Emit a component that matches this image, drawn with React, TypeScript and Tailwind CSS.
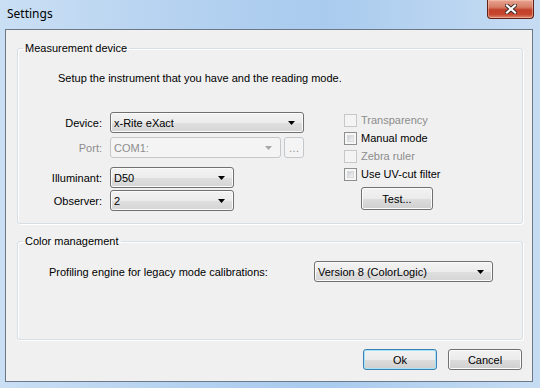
import React from "react";

const ui = "font-['Liberation_Sans',Arial,sans-serif] text-[11px] leading-[14px]";

function Arrow({ disabled }: { disabled?: boolean }) {
  return (
    <svg width="7" height="4" viewBox="0 0 7 4" className="shrink-0">
      <polygon points="0,0 7,0 3.5,4" fill={disabled ? "#a7a7a7" : "#000"} />
    </svg>
  );
}

function Combo({ text, w, disabled }: { text: string; w: string; disabled?: boolean }) {
  return (
    <div
      className={`${w} h-[21px] rounded-[3px] border flex items-center justify-between pl-[3px] pr-[8px] ${
        disabled
          ? "border-[#c4c8cb] bg-[#f4f4f4] text-[#8d8d8d]"
          : "border-[#707070] bg-[linear-gradient(#f3f3f3,#ececec_50%,#dfdfdf_51%,#d5d5d5)] text-black shadow-[inset_0_0_0_1px_#fbfbfb]"
      }`}
    >
      <span>{text}</span>
      <Arrow disabled={disabled} />
    </div>
  );
}

function Check({ label, disabled }: { label: string; disabled?: boolean }) {
  return (
    <div className="h-[18px] flex items-center">
      <div
        className={`w-[13px] h-[13px] border p-[2px] ${
          disabled ? "border-[#c8c8c8] bg-[#f4f4f4]" : "border-[#8e8f8f] bg-[#f6f6f6]"
        }`}
      >
        {!disabled && <div className="w-full h-full bg-[linear-gradient(135deg,#cbcfd5,#f4f4f4)] border border-[#d8dadc]" />}
      </div>
      <span className={`ml-[4px] ${disabled ? "text-[#8d8d8d]" : "text-black"}`}>{label}</span>
    </div>
  );
}

function Button({ text, w, h, primary }: { text: string; w: string; h: string; primary?: boolean }) {
  return (
    <div
      className={`${w} ${h} rounded-[3px] border flex items-center justify-center bg-[linear-gradient(#f2f2f2,#ebebeb_50%,#dddddd_51%,#cfcfcf)] ${
        primary
          ? "border-[#3c7fb1] shadow-[inset_0_0_0_1px_#a3e4f9]"
          : "border-[#707070] shadow-[inset_0_0_0_1px_#fcfcfc]"
      }`}
    >
      {text}
    </div>
  );
}

function CloseButton() {
  return (
    <div className="w-[47px] h-[19px] rounded-b-[4px] border border-t-0 border-[#5e2218] bg-[linear-gradient(#e8a491,#d77d66_40%,#c2412a_55%,#c5462d_80%,#e0896e)] shadow-[inset_0_0_0_1px_rgba(255,210,190,0.45)] flex items-center justify-center">
      <svg width="12" height="10" viewBox="0 0 12 10">
        <g strokeLinecap="square">
          <path d="M2 1.5 L10 8.5 M10 1.5 L2 8.5" stroke="#3b2a28" strokeWidth="4" />
          <path d="M2 1.5 L10 8.5 M10 1.5 L2 8.5" stroke="#ffffff" strokeWidth="2.2" />
        </g>
      </svg>
    </div>
  );
}

export default function App() {
  return (
    <div className={`w-[540px] h-[388px] overflow-hidden flex flex-col bg-[linear-gradient(90deg,#cadff4,#b4d1f0_35%,#a9cbee_60%,#c6dcf3)] ${ui}`}>
      <div className="h-[29px] shrink-0 flex items-start justify-between pl-[7px] pr-[6px]">
        <span className="mt-[6px] font-['Noto_Sans',sans-serif] text-[12px] leading-[16px] text-black">Settings</span>
        <CloseButton />
      </div>

      <div className="ml-[5px] w-[528px] h-[353px] border border-[#6b7888] bg-[#f0f0f0] flex flex-col pl-[11px] text-black">
        <fieldset className="mt-[11px] w-[506px] h-[183px] rounded-[3px] border border-[#d5dfe5] shadow-[inset_1px_1px_0_#fff,1px_1px_0_#fff]">
          <legend className="ml-[5px] px-[2px] leading-[14px]">Measurement device</legend>
          <div className="mt-[16px] pl-[40px]">Setup the instrument that you have and the reading mode.</div>
          <div className="mt-[27px] flex">
            <div className="w-[286px] flex flex-col">
              <div className="flex items-center">
                <span className="w-[84px] text-right">Device:</span>
                <div className="ml-[8px]"><Combo text="x-Rite eXact" w="w-[194px]" /></div>
              </div>
              <div className="mt-[4px] flex items-center">
                <span className="w-[84px] text-right text-[#8d8d8d]">Port:</span>
                <div className="ml-[8px] flex">
                  <Combo text="COM1:" w="w-[171px]" disabled />
                  <div className="ml-[3px] w-[20px] h-[21px] rounded-[3px] border border-[#c4c8cb] bg-[#f4f4f4] text-[#8d8d8d] flex items-center justify-center">…</div>
                </div>
              </div>
              <div className="mt-[9px] flex items-center">
                <span className="w-[84px] text-right">Illuminant:</span>
                <div className="ml-[8px]"><Combo text="D50" w="w-[124px]" /></div>
              </div>
              <div className="mt-[2px] flex items-center">
                <span className="w-[84px] text-right">Observer:</span>
                <div className="ml-[8px]"><Combo text="2" w="w-[124px]" /></div>
              </div>
            </div>
            <div className="ml-[40px] mt-[-1px] flex flex-col">
              <Check label="Transparency" disabled />
              <Check label="Manual mode" />
              <Check label="Zebra ruler" disabled />
              <Check label="Use UV-cut filter" />
              <div className="mt-[4px] ml-[17px]">
                <Button text="Test..." w="w-[72px]" h="h-[23px]" />
              </div>
            </div>
          </div>
        </fieldset>

        <fieldset className="mt-[10px] w-[506px] h-[106px] rounded-[3px] border border-[#d5dfe5] shadow-[inset_1px_1px_0_#fff,1px_1px_0_#fff]">
          <legend className="ml-[5px] px-[2px] leading-[14px]">Color management</legend>
          <div className="mt-[13px] flex items-center">
            <span className="pl-[31px] w-[296px]">Profiling engine for legacy mode calibrations:</span>
            <Combo text="Version 8 (ColorLogic)" w="w-[179px]" />
          </div>
        </fieldset>

        <div className="mt-[9px] w-[505px] flex justify-end gap-[11px]">
          <Button text="Ok" w="w-[74px]" h="h-[21px]" primary />
          <Button text="Cancel" w="w-[74px]" h="h-[21px]" />
        </div>
      </div>
    </div>
  );
}
